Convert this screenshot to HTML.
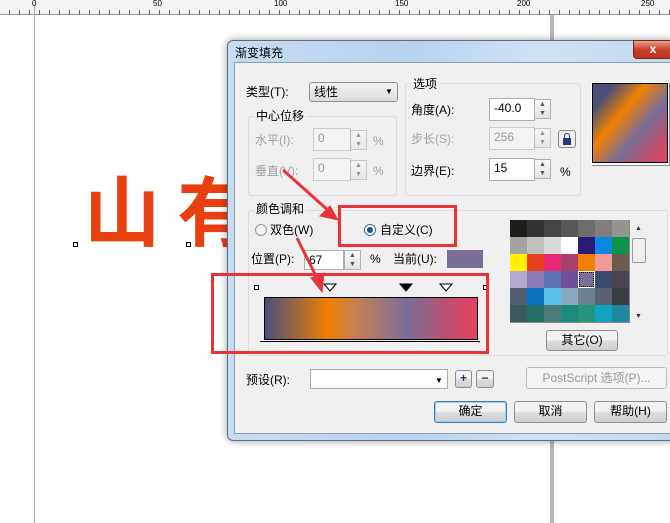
<!DOCTYPE html><html><head><meta charset="utf-8"><style>
*{margin:0;padding:0;box-sizing:border-box}
body{width:670px;height:523px;background:#fff;position:relative;overflow:hidden;font-family:"Liberation Sans","Noto Sans CJK SC",sans-serif;font-size:12px;color:#000}
.a{position:absolute}
.t{position:absolute;white-space:nowrap;font-size:12px;line-height:14px}
.g{color:#a0a0a0}
.in{position:absolute;background:#fff;border:1px solid #abadb3;font-size:12px;padding:1px 4px;line-height:16px}
.in.d{background:#f4f4f4;border-color:#ccc;color:#999}
.sp{position:absolute;border:1px solid #b0b0b0;background:linear-gradient(#fafafa,#e2e2e2);font-size:7px;color:#555;text-align:center;line-height:9px}
.gb{position:absolute;border:1px solid #dcdcdc;border-radius:3px}
.btn{position:absolute;border:1px solid #8e8f8f;border-radius:3px;background:linear-gradient(#f2f2f2 45%,#dcdcdc 55%,#cfcfcf);text-align:center;font-size:12px;line-height:19px}
</style></head><body>
<!-- ruler -->
<div class="a" style="left:0;top:0;width:670px;height:15px;background:#f4f4f4;border-bottom:1px solid #999"></div>
<div class="t" style="left:32px;top:-3px;font-size:8px">0</div>
<div class="t" style="left:153px;top:-3px;font-size:8px">50</div>
<div class="t" style="left:274px;top:-3px;font-size:8px">100</div>
<div class="t" style="left:395px;top:-3px;font-size:8px">150</div>
<div class="t" style="left:517px;top:-3px;font-size:8px">200</div>
<div class="t" style="left:641px;top:-3px;font-size:8px">250</div>
<div class="a" style="left:0;top:10px;width:670px;height:5px;background:repeating-linear-gradient(90deg,transparent 0 9px,#666 9px 10px)"></div>
<div class="a" style="left:34px;top:6px;width:1px;height:517px;background:#aaa"></div>
<div class="a" style="left:550px;top:15px;width:4px;height:508px;background:#b8b8b8"></div>
<!-- big red text -->
<div class="t" style="left:84px;top:162px;font-size:76px;line-height:90px;font-weight:bold;color:#e84010;font-family:'Noto Sans CJK SC',sans-serif">山&nbsp;有</div>
<div class="a" style="left:73px;top:242px;width:5px;height:5px;border:1px solid #000;background:#fff"></div>
<div class="a" style="left:186px;top:242px;width:5px;height:5px;border:1px solid #000;background:#fff"></div>
<!-- dialog -->
<div class="a" style="left:227px;top:40px;width:450px;height:401px;border:1px solid #5a6f86;border-radius:6px;background:linear-gradient(90deg,#c7dcf0,#b8d3ee 40%,#cfe2f4 70%,#c2d8ee);box-shadow:0 0 8px rgba(0,0,0,.4)"></div>
<div class="t" style="left:235px;top:46px;font-size:12px">渐变填充</div>
<div class="a" style="left:633px;top:40px;width:40px;height:19px;background:linear-gradient(#e8a090,#c8402a 50%,#c03020);border:1px solid #6b2a20;border-radius:0 0 4px 4px;color:#fff;font-weight:bold;text-align:center;line-height:17px">x</div>
<div class="a" style="left:234px;top:62px;width:440px;height:372px;background:#f0f0f0;border:1px solid #8ca0b8"></div>
<!-- type -->
<div class="t" style="left:246px;top:85px">类型(T):</div>
<div class="a" style="left:309px;top:82px;width:89px;height:20px;border:1px solid #8e8f8f;border-radius:3px;background:linear-gradient(#f4f4f4,#dcdcdc)"></div>
<div class="t" style="left:314px;top:85px">线性</div>
<div class="t" style="left:385px;top:85px;font-size:8px">▼</div>
<!-- center offset -->
<div class="gb" style="left:248px;top:116px;width:149px;height:80px"></div>
<div class="t" style="left:254px;top:109px;background:#f0f0f0;padding:0 2px">中心位移</div>
<div class="t g" style="left:255px;top:133px">水平(I):</div>
<div class="in d" style="left:313px;top:128px;width:38px;height:23px">0</div>
<div class="sp" style="left:350px;top:130px;width:17px;height:20px;opacity:.6">▲<br>▼</div>
<div class="t g" style="left:373px;top:134px">%</div>
<div class="t g" style="left:255px;top:164px">垂直(V):</div>
<div class="in d" style="left:313px;top:158px;width:38px;height:23px">0</div>
<div class="sp" style="left:350px;top:160px;width:17px;height:20px;opacity:.6">▲<br>▼</div>
<div class="t g" style="left:373px;top:164px">%</div>
<!-- options -->
<div class="gb" style="left:405px;top:83px;width:176px;height:113px"></div>
<div class="t" style="left:411px;top:77px;background:#f0f0f0;padding:0 2px">选项</div>
<div class="t" style="left:411px;top:103px">角度(A):</div>
<div class="in" style="left:489px;top:98px;width:46px;height:23px">-40.0</div>
<div class="sp" style="left:534px;top:99px;width:17px;height:20px">▲<br>▼</div>
<div class="t g" style="left:411px;top:132px">步长(S):</div>
<div class="in d" style="left:489px;top:127px;width:46px;height:23px">256</div>
<div class="sp" style="left:534px;top:128px;width:17px;height:20px;opacity:.6">▲<br>▼</div>
<div class="a" style="left:558px;top:130px;width:18px;height:18px;border:1px solid #888;border-radius:3px;background:#eee"><div class="a" style="left:4px;top:7px;width:8px;height:7px;background:#2a3a70"></div><div class="a" style="left:5px;top:2px;width:6px;height:6px;border:1.5px solid #2a3a70;border-bottom:none;border-radius:3px 3px 0 0"></div></div>
<div class="t" style="left:411px;top:164px">边界(E):</div>
<div class="in" style="left:489px;top:158px;width:46px;height:23px">15</div>
<div class="sp" style="left:534px;top:159px;width:17px;height:20px">▲<br>▼</div>
<div class="t" style="left:560px;top:165px">%</div>
<!-- preview -->
<div class="a" style="left:591px;top:82px;width:78px;height:83px;border:1px solid #fff;box-shadow:1px 1px 0 #888"></div>
<div class="a" style="left:592px;top:83px;width:76px;height:80px;border:1px solid #000;background:linear-gradient(130deg,#4a4f7a 0%,#4a4f7a 15%,#f08000 38%,#7a6e98 62%,#b85070 82%,#e84060 100%)"></div>
<!-- blend group -->
<div class="gb" style="left:248px;top:210px;width:420px;height:146px"></div>
<div class="t" style="left:254px;top:202px;background:#f0f0f0;padding:0 2px">颜色调和</div>
<div class="a" style="left:255px;top:224px;width:12px;height:12px;border:1px solid #999;border-radius:50%;background:#f4f4f4"></div>
<div class="t" style="left:270px;top:223px">双色(W)</div>
<div class="a" style="left:364px;top:224px;width:12px;height:12px;border:1px solid #3c6a96;border-radius:50%;background:#fff"><div class="a" style="left:2px;top:2px;width:6px;height:6px;border-radius:50%;background:#1f4f8a"></div></div>
<div class="t" style="left:380px;top:223px">自定义(C)</div>
<div class="t" style="left:251px;top:252px">位置(P):</div>
<div class="in" style="left:304px;top:250px;width:40px;height:20px">67</div>
<div class="sp" style="left:344px;top:250px;width:17px;height:20px">▲<br>▼</div>
<div class="t" style="left:370px;top:252px">%</div>
<div class="t" style="left:393px;top:252px">当前(U):</div>
<div class="a" style="left:447px;top:250px;width:36px;height:18px;background:#7a6e98"></div>
<!-- markers -->
<div class="a" style="left:254px;top:285px;width:5px;height:5px;border:1px solid #000;background:#fff"></div>
<div class="a" style="left:483px;top:285px;width:5px;height:5px;border:1px solid #000;background:#fff"></div>
<svg class="a" style="left:320px;top:283px" width="140" height="12"><path d="M4 1h12l-6 7z" fill="#fff" stroke="#000"/><path d="M80 1h12l-6 7z" fill="#000" stroke="#000"/><path d="M120 1h12l-6 7z" fill="#fff" stroke="#000"/></svg>
<div class="a" style="left:264px;top:297px;width:214px;height:43px;border:1px solid #000;background:linear-gradient(90deg,#4a4f7a 0%,#f08000 30%,#c98050 42%,#7a6e98 67%,#b85070 85%,#e84060 100%)"></div>
<div class="a" style="left:260px;top:341px;width:220px;height:2px;border-top:1px solid #000;border-right:1px solid #888"></div>
<!-- palette -->
<div class="a" id="pal" style="left:510px;top:220px;width:120px;height:103px;display:grid;grid-template-columns:repeat(7,17px);grid-auto-rows:17px;background:#888">
<i style="background:#1f1d1a"></i><i style="background:#333130"></i><i style="background:#474543"></i><i style="background:#5a5857"></i><i style="background:#6e6c6a"></i><i style="background:#7f7e7c"></i><i style="background:#959492"></i>
<i style="background:#a3a3a3"></i><i style="background:#bfbfbf"></i><i style="background:#dadada"></i><i style="background:#ffffff"></i><i style="background:#2c1a7b"></i><i style="background:#0a87e0"></i><i style="background:#0b9447"></i>
<i style="background:#fff200"></i><i style="background:#e8401c"></i><i style="background:#e92876"></i><i style="background:#a8406c"></i><i style="background:#f08000"></i><i style="background:#f29a9a"></i><i style="background:#6b5b4e"></i>
<i style="background:#b4a8d0"></i><i style="background:#8d7bb5"></i><i style="background:#5e73b5"></i><i style="background:#6f4f9a"></i><i style="background:#7a6e98;outline:1px dotted #000;outline-offset:-2px;border:1px solid #fff"></i><i style="background:#3d4a70"></i><i style="background:#4a4350"></i>
<i style="background:#4f5e75"></i><i style="background:#0a70c0"></i><i style="background:#5bbfec"></i><i style="background:#8aa9c0"></i><i style="background:#6c8090"></i><i style="background:#5a6270"></i><i style="background:#393e44"></i>
<i style="background:#3b5a5e"></i><i style="background:#246e64"></i><i style="background:#4e7a7c"></i><i style="background:#1a8c7c"></i><i style="background:#2a947a"></i><i style="background:#11a4c0"></i><i style="background:#1e88a0"></i>
</div>
<div class="t" style="left:635px;top:222px;font-size:7px;color:#333">▲</div>
<div class="a" style="left:632px;top:238px;width:14px;height:25px;border:1px solid #999;border-radius:2px;background:#eee"></div>
<div class="t" style="left:635px;top:310px;font-size:7px;color:#333">▼</div>
<div class="btn" style="left:546px;top:330px;width:72px;height:21px">其它(O)</div>
<!-- preset -->
<div class="t" style="left:246px;top:373px">预设(R):</div>
<div class="in" style="left:310px;top:369px;width:138px;height:20px"></div>
<div class="t" style="left:435px;top:374px;font-size:8px">▼</div>
<div class="btn" style="left:455px;top:370px;width:17px;height:18px;line-height:15px;font-weight:bold;color:#2a3a70">+</div>
<div class="btn" style="left:476px;top:370px;width:18px;height:18px;line-height:15px;font-weight:bold;color:#2a3a70">−</div>
<div class="a" style="left:526px;top:367px;width:141px;height:22px;border:1px solid #bbb;border-radius:3px;background:#f4f4f4;color:#999;text-align:center;line-height:20px">PostScript 选项(P)...</div>
<div class="btn" style="left:434px;top:401px;width:73px;height:22px;border-color:#3c7fb1;box-shadow:inset 0 0 0 1px #9ad0f0">确定</div>
<div class="btn" style="left:514px;top:401px;width:73px;height:22px">取消</div>
<div class="btn" style="left:594px;top:401px;width:73px;height:22px">帮助(H)</div>
<!-- annotations -->
<div class="a" style="left:338px;top:205px;width:119px;height:42px;border:3px solid #e8333a"></div>
<div class="a" style="left:211px;top:273px;width:278px;height:81px;border:3px solid #e8333a"></div>
<svg class="a" style="left:0;top:0" width="670" height="523"><g fill="#e8333a" stroke="#e8333a" stroke-width="3"><line x1="283" y1="170" x2="330" y2="212"/><path d="M338 220l-18-4 10-10z" stroke-width="1"/><line x1="297" y1="238" x2="318" y2="280"/><path d="M322 292l-11-14 13-5z" stroke-width="1"/></g></svg>
</body></html>
